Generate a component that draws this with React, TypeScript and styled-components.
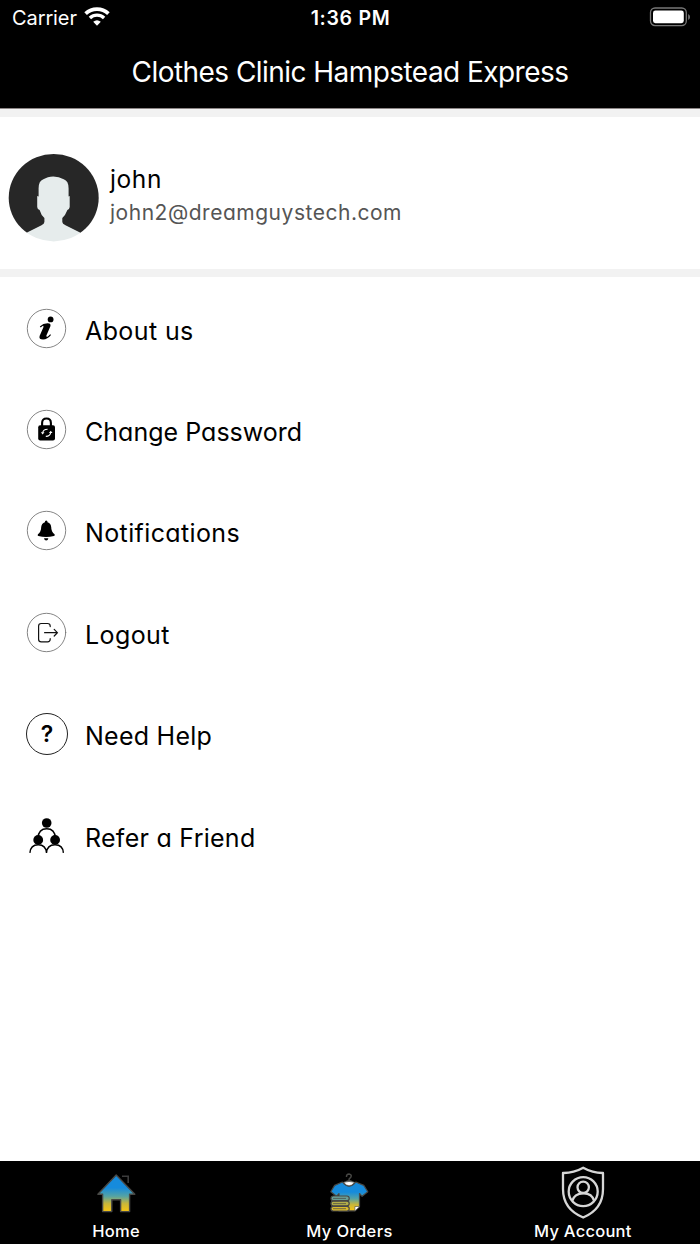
import React from "react";
import styled, { createGlobalStyle } from "styled-components";

const GlobalStyle = createGlobalStyle`
  * { box-sizing: border-box; }
  body {
    margin: 0;
    background: #fff;
    font-family: Inter, "Liberation Sans", sans-serif;
  }
`;

const Screen = styled.div`
  display: flex;
  flex-direction: column;
  width: 700px;
  height: 1244px;
  background: #fff;
  overflow: hidden;
`;

const Header = styled.header`
  flex: none;
  height: 109px;
  background: #000;
  color: #fff;
  border-bottom: 1px solid #8d8686;
`;

const StatusBar = styled.div`
  display: grid;
  grid-template-columns: 1fr auto 1fr;
  align-items: center;
  height: 36px;
  padding: 0 9px 0 12px;
`;

const Carrier = styled.div`
  display: flex;
  align-items: center;
  gap: 7px;
  font-size: 20px;
  letter-spacing: -0.1px;
  svg { display: block; margin-top: -3px; }
`;

const Clock = styled.div`
  margin-right: 2px;
  font-size: 19.5px;
  font-weight: 600;
  letter-spacing: 0.7px;
`;

const Battery = styled.svg`
  display: block;
  justify-self: end;
  margin-top: -2px;
`;

const Title = styled.h1`
  margin: 0;
  height: 72px;
  line-height: 73px;
  text-align: center;
  font-size: 28px;
  font-weight: 400;
  letter-spacing: -0.55px;
`;

const Divider = styled.div`
  flex: none;
  height: 8px;
  background: #f2f2f2;
`;

const Profile = styled.section`
  flex: none;
  display: flex;
  height: 152px;
  padding: 37px 0 0 8px;
  gap: 11px;
`;

const ProfileText = styled.div`
  padding-top: 9px;
`;

const Name = styled.div`
  height: 33px;
  line-height: 33px;
  font-size: 24.5px;
  letter-spacing: 0.6px;
  color: #000;
`;

const Email = styled.div`
  height: 33px;
  line-height: 33px;
  font-size: 21px;
  font-feature-settings: "cv11";
  letter-spacing: 0.52px;
  color: #555;
`;

const Menu = styled.nav`
  flex: 1;
  display: flex;
  flex-direction: column;
  padding-top: 0.5px;
`;

const MenuRow = styled.a`
  display: flex;
  align-items: center;
  height: 101.4px;
  padding-left: 25px;
  gap: 16px;
  svg { display: block; flex: none; }
`;

const MenuLabel = styled.span<{ $spacing: number }>`
  margin-top: 5px;
  padding-left: 1px;
  font-size: 25px;
  line-height: 32px;
  font-feature-settings: "cv11";
  letter-spacing: ${(p) => p.$spacing}px;
  color: #000;
`;

const TabBar = styled.footer`
  flex: none;
  display: grid;
  grid-template-columns: repeat(3, 1fr);
  height: 83px;
  background: #000;
`;

const Tab = styled.a`
  display: flex;
  flex-direction: column;
  align-items: center;
  padding: 4px 1px 0 0;
  color: #fff;
  svg { display: block; }
`;

const TabLabel = styled.span<{ $spacing: number }>`
  font-size: 16.5px;
  line-height: 24px;
  font-weight: 500;
  letter-spacing: ${(p) => p.$spacing}px;
`;

const WifiIcon = () => (
  <svg width="26" height="19" viewBox="0 0 26 19" fill="none" stroke="#fff">
    <path d="M1.6 6.6C8 .6 18 .6 24.4 6.6" strokeWidth="3.8" />
    <path d="M5.9 11C10 7.2 16 7.2 20.1 11" strokeWidth="3.4" />
    <path d="M9.2 14.8Q13 11.6 16.8 14.8L13 18.7Z" fill="#fff" stroke="none" />
  </svg>
);

const Avatar = () => (
  <svg width="91" height="88" viewBox="0 0 91 88">
    <defs>
      <clipPath id="face">
        <ellipse cx="45.7" cy="43.7" rx="45" ry="43.7" />
      </clipPath>
    </defs>
    <g clipPath="url(#face)">
      <path fill="#272727" d="M0 0H91V79H0Z" />
      <path
        fill="#e6ecec"
        d="M30.6 42.5L29.2 42V53Q29.4 55.5 31.6 56Q33 61 36.4 64V68Q36.4 70 33.5 71.3L18 79V90H73V79L57.5 71.3Q54.3 70 54.3 68V64Q57.6 61 59.4 56Q61.4 55.5 61.7 53V42L60.6 42.5V35Q60.8 27 55.7 25.3Q51 22.4 45.3 22.4Q39.5 22.4 35.4 25.3Q30.4 27 30.6 35Z"
      />
    </g>
  </svg>
);

const Ring = () => (
  <circle cx="21.5" cy="21.5" r="19.2" fill="#fff" stroke="#777" strokeWidth="0.9" />
);

const InfoIcon = () => (
  <svg width="43" height="43" viewBox="0 0 43 43">
    <Ring />
    <circle cx="25.6" cy="12.4" r="2.9" />
    <path d="M14.8 19.5Q18.3 16.2 22.7 16.3Q26.2 16.3 25.4 19.3L21.4 28.6Q20.9 30.4 22.9 29.4L25.2 27.2L26 27.9Q22.4 32.2 18.1 32.4Q13.6 32.4 14.6 28.9L18.4 20.3Q18.8 18.4 17.5 19L15.7 20.4Z" />
  </svg>
);

const LockIcon = () => (
  <svg width="43" height="43" viewBox="0 0 43 43">
    <Ring />
    <path d="M17.1 19V15Q17.1 10.5 21.5 10.5T25.9 15V19" fill="none" stroke="#000" strokeWidth="2.1" />
    <rect x="13.2" y="17.2" width="16.8" height="15.3" rx="2" />
    <g fill="none" stroke="#fff" strokeWidth="1.1">
      <path d="M17.7 24.7Q18.2 21.2 22.6 21.2" />
      <path d="M25.7 24.7Q25 28.5 20.8 28.4" />
    </g>
    <path d="M15.9 24.3H19.5L17.6 26.6ZM23.9 25.1L25.8 22.7L27.5 25.1Z" fill="#fff" />
  </svg>
);

const BellIcon = () => (
  <svg width="43" height="43" viewBox="0 0 43 43">
    <Ring />
    <path d="M19.9 13.2Q19.8 11.7 21.2 11.6Q22.7 11.7 22.5 13.2Q26 14.4 26.2 18Q26.2 23 29.6 25.3Q30.2 26.7 28.9 27.1Q21 28.9 13.4 27.1Q12.2 26.7 12.9 25.3Q16.2 23 16.2 18Q16.5 14.4 19.9 13.2Z" />
    <path d="M19 29.3H23.4Q23 31.5 21.2 31.5T19 29.3Z" />
  </svg>
);

const LogoutIcon = () => (
  <svg width="43" height="43" viewBox="0 0 43 43" fill="none" stroke="#111" strokeWidth="1.2" strokeLinecap="round">
    <Ring />
    <path d="M25.2 15.6V15Q25.2 12.5 22.6 12.5H16.2Q13.6 12.5 13.6 15.1V28.2Q13.6 30.8 16.2 30.8H22.6Q25.2 30.8 25.2 28.3V27.7" />
    <path d="M19.6 21.7H32M29.2 18.4L32.4 21.7L29.2 25" />
  </svg>
);

const HelpMark = styled.span`
  display: flex;
  align-items: center;
  justify-content: center;
  flex: none;
  width: 42px;
  height: 42px;
  margin: 0 0 0 1px;
  border: 1px solid #222;
  border-radius: 50%;
  font-size: 23px;
  font-weight: 600;
`;

const ReferIcon = () => (
  <svg width="43" height="43" viewBox="0 0 43 43">
    <g fill="none" stroke="#000" strokeWidth="1.4">
      <path d="M13 24Q13.5 14.8 21.7 14.8T30.4 24" />
      <path d="M4.9 38.9Q5.5 30.7 13.2 30.7T21.5 38.9Q22 30.7 30 30.7T38.4 38.9" />
    </g>
    <circle cx="21.7" cy="9" r="4.8" />
    <circle cx="13.2" cy="25.9" r="4.9" />
    <circle cx="30.1" cy="25.9" r="4.9" />
  </svg>
);

const BlueGold = ({ id }: { id: string }) => (
  <linearGradient id={id} x1="0" y1="0" x2="0" y2="1">
    <stop offset="0.35" stopColor="#168bdc" />
    <stop offset="0.58" stopColor="#55a3a4" />
    <stop offset="0.78" stopColor="#c8b63b" />
    <stop offset="0.95" stopColor="#eec21a" />
  </linearGradient>
);

const HomeIcon = () => (
  <svg width="54" height="54" viewBox="0 0 54 54">
    <defs><BlueGold id="home" /></defs>
    <path d="M33 11.3H39.2V18" fill="none" stroke="#3c3c3c" strokeWidth="1.6" />
    <path
      d="M27.2 10L8.9 29.2H13.6V46.6H22.8V34.8H31.6V46.6H40.6V29.2H45.8Z"
      fill="url(#home)" stroke="#484845" strokeWidth="1.4" strokeLinejoin="round"
    />
  </svg>
);

const OrdersIcon = () => (
  <svg width="54" height="54" viewBox="0 0 54 54">
    <defs><BlueGold id="shirt" /></defs>
    <g stroke="#484845" strokeLinejoin="round">
      <path d="M24.5 12Q24.3 9 27.1 9Q30.2 9.8 28.8 12.2L27.1 14V15.5L21 18M27.1 15.5L33 18" fill="none" strokeWidth="1.5" />
      <path
        d="M20.4 17L12.6 20.4L8.8 26.7L14.5 31.3L17 28.6V45.9H33L37.5 41.5V28.5L40.1 31.3L45.8 26.7L41.8 20.4L33.8 17Q27 25.5 20.4 17Z"
        fill="url(#shirt)" strokeWidth="1.2"
      />
      <path d="M21.7 17.5Q27 15.4 32.5 17.5Q27 24 21.7 17.5Z" fill="#fff" strokeWidth="0.5" />
      <path d="M32.9 46V41.5H37.7Z" fill="#fff" strokeWidth="0.6" />
      <rect x="9" y="31" width="18.2" height="4.7" rx="2.3" fill="#6a9e94" strokeWidth="1.2" />
      <rect x="9" y="36.2" width="18.2" height="4.7" rx="2.3" fill="#b4af49" strokeWidth="1.2" />
      <rect x="9" y="41.3" width="18.2" height="4.7" rx="2.3" fill="#d9b92d" strokeWidth="1.2" />
      <path d="M11 33.4H24M11 38.6H24M11 43.7H24" strokeWidth="0.7" />
    </g>
  </svg>
);

const AccountIcon = () => (
  <svg width="54" height="54" viewBox="0 0 54 54" fill="none" stroke="#d6d6d6" strokeWidth="2.3">
    <path d="M27.2 2.7Q37 8.2 47 8V24Q47 44.2 27.2 52.5Q7 44.2 7 24V8Q17.4 8.2 27.2 2.7Z" strokeLinejoin="round" />
    <circle cx="27.2" cy="26.6" r="14.5" />
    <circle cx="27.2" cy="22.3" r="5.7" />
    <path d="M16.3 35.8Q18.3 28.5 27.2 28.3T38.1 35.8" />
  </svg>
);

const rows = [
  { label: "About us", spacing: 0.4, icon: <InfoIcon /> },
  { label: "Change Password", spacing: 0.02, icon: <LockIcon /> },
  { label: "Notifications", spacing: 0.38, icon: <BellIcon /> },
  { label: "Logout", spacing: 0.4, icon: <LogoutIcon /> },
  { label: "Need Help", spacing: 0.25, icon: <HelpMark>?</HelpMark> },
  { label: "Refer a Friend", spacing: 0.27, icon: <ReferIcon /> },
];

const tabs = [
  { label: "Home", spacing: 0.35, icon: <HomeIcon /> },
  { label: "My Orders", spacing: 0.4, icon: <OrdersIcon /> },
  { label: "My Account", spacing: 0.25, icon: <AccountIcon /> },
];

export default function App() {
  return (
    <Screen>
      <GlobalStyle />
      <Header>
        <StatusBar>
          <Carrier>Carrier<WifiIcon /></Carrier>
          <Clock>1:36 PM</Clock>
          <Battery width="42" height="20" viewBox="0 0 42 20">
            <rect x="1.5" y="1" width="35.8" height="17.6" rx="4.5" fill="none" stroke="#777" strokeWidth="1.3" />
            <rect x="4" y="3.6" width="30.8" height="12.6" rx="2.4" fill="#fff" />
            <path d="M39.2 7V13Q41 12 41 10T39.2 7Z" fill="#777" />
          </Battery>
        </StatusBar>
        <Title>Clothes Clinic Hampstead Express</Title>
      </Header>
      <Divider />
      <Profile>
        <Avatar />
        <ProfileText>
          <Name>john</Name>
          <Email>john2@dreamguystech.com</Email>
        </ProfileText>
      </Profile>
      <Divider />
      <Menu>
        {rows.map((r) => (
          <MenuRow key={r.label}>
            {r.icon}
            <MenuLabel $spacing={r.spacing}>{r.label}</MenuLabel>
          </MenuRow>
        ))}
      </Menu>
      <TabBar>
        {tabs.map((t) => (
          <Tab key={t.label}>
            {t.icon}
            <TabLabel $spacing={t.spacing}>{t.label}</TabLabel>
          </Tab>
        ))}
      </TabBar>
    </Screen>
  );
}
